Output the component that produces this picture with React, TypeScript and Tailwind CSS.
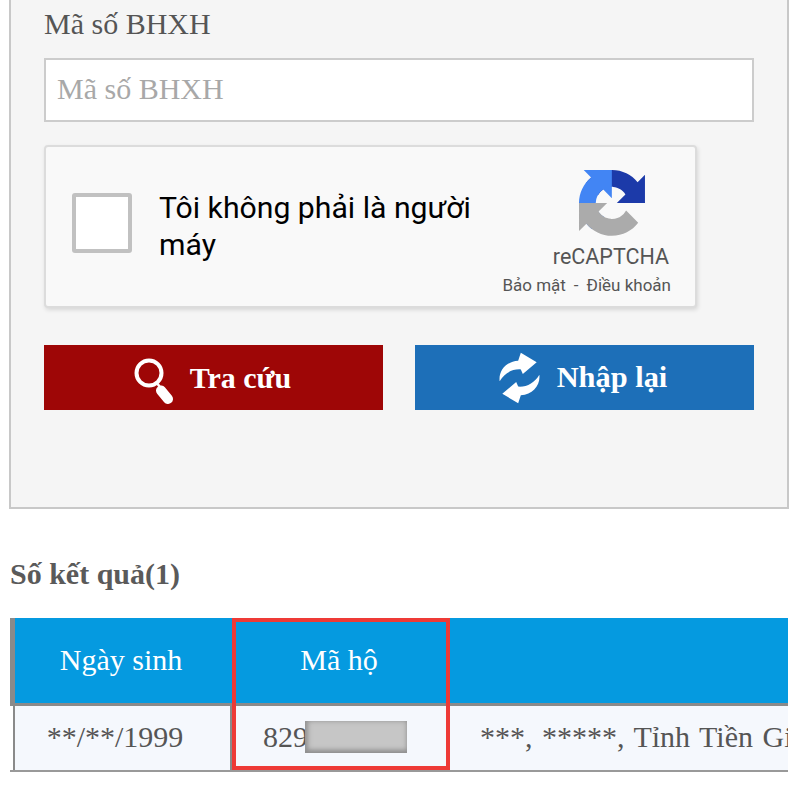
import React from 'react';

const serif = "font-['Liberation_Serif',serif]";
const roboto = "font-['Roboto',sans-serif]";

const SearchIcon = () => (
  <svg viewBox="0 0 42 52" className="h-[52px] w-[42px] shrink-0" fill="none" stroke="white">
    <circle cx="16" cy="21" r="12.5" strokeWidth="4" />
    <path d="M23 30l4 5" strokeWidth="2.5" />
    <path d="M28 38.5l7 8.5" strokeWidth="10" strokeLinecap="round" />
  </svg>
);

const RefreshIcon = () => (
  <svg viewBox="28 12 124 156" className="h-[52px] w-[41px] shrink-0" fill="white">
    <path d="M30 100C26 68 50 40 86 38L94 14L142 42L100 78L94 64C68 62 44 76 30 100Z" />
    <path d="M30 100C26 68 50 40 86 38L94 14L142 42L100 78L94 64C68 62 44 76 30 100Z" transform="rotate(180 90 90)" />
  </svg>
);

const RecaptchaLogo = () => (
  <svg viewBox="0 0 64 64" className="h-[66px] w-[66px]">
    <path
      d="M64 31.955l-.033-1.37V4.687l-7.16 7.16C50.948 4.674 42.033.093 32.05.093c-10.4 0-19.622 4.96-25.458 12.64l11.736 11.86a15.55 15.55 0 0 1 4.754-5.334c2.05-1.6 4.952-2.906 8.968-2.906.485 0 .86.057 1.135.163 4.976.393 9.29 3.14 11.83 7.124l-8.307 8.307 26.314.01"
      fill="#1c3aa9"
    />
    <path
      d="M31.862.002l-1.37.033H4.594l7.16 7.16C4.58 13.055 0 21.97 0 31.953c0 10.4 4.96 19.622 12.64 25.458L24.5 45.676a15.55 15.55 0 0 1-5.334-4.754c-1.6-2.05-2.906-4.952-2.906-8.968 0-.485.057-.86.163-1.135.393-4.976 3.14-9.29 7.124-11.83l8.307 8.307L31.862.002"
      fill="#4285f4"
    />
    <path
      d="M.001 31.953l.033 1.37v25.898l7.16-7.16c5.86 7.173 14.774 11.754 24.76 11.754 10.4 0 19.622-4.96 25.458-12.64l-11.736-11.86a15.55 15.55 0 0 1-4.754 5.334c-2.05 1.6-4.952 2.906-8.968 2.906-.485 0-.86-.057-1.135-.163-4.976-.393-9.29-3.14-11.83-7.124l8.307-8.307-26.314-.01"
      fill="#ababab"
    />
  </svg>
);

export default function App() {
  return (
    <div className={`h-[800px] w-[800px] overflow-hidden bg-white ${serif}`}>
      <div className="ml-[9px] w-[780px] border-x-2 border-b-2 border-[#c8c8c8] bg-[#f5f5f5] pl-[33px] pr-[33px] pt-[7px] pb-[97px]">
        <div className="mb-[17px] h-[34px] text-[30px] leading-[34px] text-[#555]">Mã số BHXH</div>
        <input
          placeholder="Mã số BHXH"
          className="block h-[64px] w-full border-2 border-[#ccc] bg-white px-[11px] pb-[2px] text-[30px] outline-none placeholder:text-[#a8a8a8]"
        />

        <div className="mt-[23px] flex h-[163px] w-[653px] items-center justify-between rounded-[4px] border-2 border-[#dcdcdc] bg-[#f9f9f9] pl-[26px] pr-[24px] shadow-[1px_2px_4px_rgba(0,0,0,0.12)]">
          <div className="flex items-center gap-[27px]">
            <div className="mb-[8px] h-[60px] w-[60px] rounded-[3px] border-4 border-[#c1c1c1] bg-white" />
            <div className={`mb-[2px] w-[330px] text-[30.2px] leading-[37px] text-black ${roboto}`}>Tôi không phải là người máy</div>
          </div>
          <div className={`flex flex-col items-end pt-[20px] pb-[6px] text-[#555] ${roboto}`}>
            <div className="mr-[26px]">
              <RecaptchaLogo />
            </div>
            <div className="mt-[8px] mr-[2px] text-[21.5px] leading-[26px]">reCAPTCHA</div>
            <div className="mt-[3px] flex gap-[8px] whitespace-nowrap text-[17px] leading-[24px]">
              <span>Bảo mật</span>
              <span>-</span>
              <span>Điều khoản</span>
            </div>
          </div>
        </div>

        <div className="mt-[37px] flex justify-between">
          <button className="flex h-[65px] w-[339px] items-center justify-center gap-[15px] bg-[#9e0606] pr-[3px] text-[30px] font-bold text-white">
            <SearchIcon />
            Tra cứu
          </button>
          <button className="flex h-[65px] w-[339px] items-center justify-center gap-[17px] bg-[#1d6fb8] pr-[3px] text-[30.4px] font-bold text-white">
            <RefreshIcon />
            Nhập lại
          </button>
        </div>
      </div>

      <h2 className="ml-[10px] mt-[48px] h-[34px] text-[30px] font-bold leading-[34px] text-[#5a5a5a]">Số kết quả(1)</h2>

      <div className="relative ml-[10px] mt-[27px] w-[778px] overflow-hidden text-[30px]">
        <div className="flex h-[88px] border-b-[3px] border-l-[5px] border-b-[#8a8a8a] border-l-[#8a8a8a] bg-[#059ae0] pb-[2px] text-white">
          <div className="flex w-[212px] items-center justify-center">Ngày sinh</div>
          <div className="flex w-[224px] items-center justify-center">Mã hộ</div>
          <div className="flex-1" />
        </div>
        <div className="flex h-[66px] border-b-[2px] border-[#999] pl-[3px] text-[#555]">
          <div className="flex w-[217px] items-center justify-center border-l-2 border-[#8a8a8a] bg-[#f5f8fd] pr-[15px] pb-[3px]">**/**/1999</div>
          <div className="flex w-[222px] items-center border-l-2 border-[#8a8a8a] bg-[#f5f8fd] pl-[31px] pb-[3px]">
            829
            <span className="-ml-[3px] h-[32px] w-[102px] bg-[#c6c6c6] shadow-[inset_0_-3px_5px_#8f8f8f,inset_3px_0_5px_#999]" />
          </div>
          <div className="flex flex-1 items-center overflow-hidden whitespace-nowrap bg-[#f5f8fd] pl-[28px] pb-[3px] [word-spacing:2px]">***, *****, Tỉnh Tiền Giang</div>
        </div>
        <div className="absolute left-[222px] top-0 h-[152px] w-[218px] border-4 border-[#ee3a36]" />
      </div>
    </div>
  );
}
